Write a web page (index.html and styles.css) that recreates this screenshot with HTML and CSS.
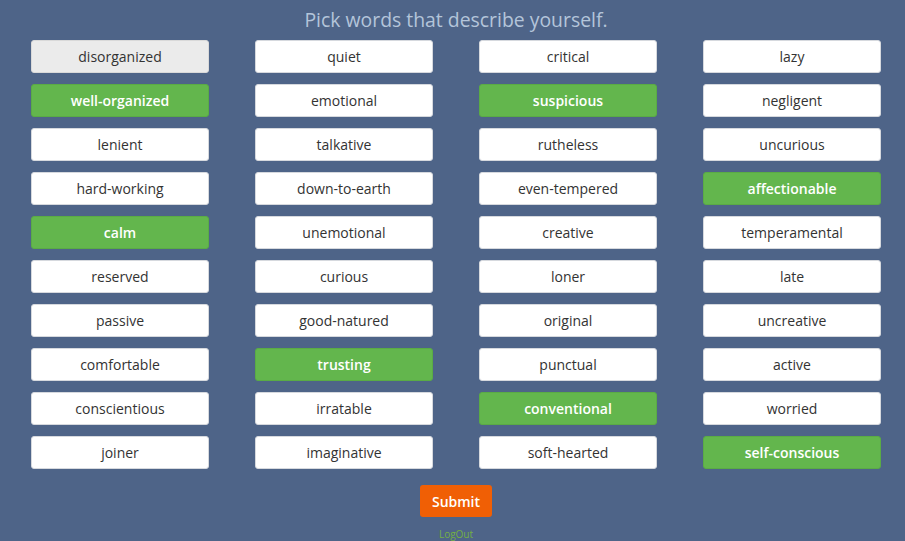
FILE: index.html
```html
<!DOCTYPE html>
<html>
<head>
<meta charset="utf-8">
<link rel="stylesheet" href="styles.css">
</head>
<body>
<div class="page">
  <h1 class="title">Pick words that describe yourself.</h1>
  <div class="grid">
    <button class="word hover">disorganized</button>
    <button class="word">quiet</button>
    <button class="word">critical</button>
    <button class="word">lazy</button>

    <button class="word on">well-organized</button>
    <button class="word">emotional</button>
    <button class="word on">suspicious</button>
    <button class="word">negligent</button>

    <button class="word">lenient</button>
    <button class="word">talkative</button>
    <button class="word">rutheless</button>
    <button class="word">uncurious</button>

    <button class="word">hard-working</button>
    <button class="word">down-to-earth</button>
    <button class="word">even-tempered</button>
    <button class="word on">affectionable</button>

    <button class="word on">calm</button>
    <button class="word">unemotional</button>
    <button class="word">creative</button>
    <button class="word">temperamental</button>

    <button class="word">reserved</button>
    <button class="word">curious</button>
    <button class="word">loner</button>
    <button class="word">late</button>

    <button class="word">passive</button>
    <button class="word">good-natured</button>
    <button class="word">original</button>
    <button class="word">uncreative</button>

    <button class="word">comfortable</button>
    <button class="word on">trusting</button>
    <button class="word">punctual</button>
    <button class="word">active</button>

    <button class="word">conscientious</button>
    <button class="word">irratable</button>
    <button class="word on">conventional</button>
    <button class="word">worried</button>

    <button class="word">joiner</button>
    <button class="word">imaginative</button>
    <button class="word">soft-hearted</button>
    <button class="word on">self-conscious</button>
  </div>
  <div class="actions">
    <button class="submit">Submit</button>
    <a class="logout" href="#">LogOut</a>
  </div>
</div>
</body>
</html>
```
FILE: styles.css
```css
html, body {
  margin: 0;
  padding: 0;
  background: #4e6488;
  height: 100%;
  overflow: hidden;
}
body {
  font-family: "Open Sans", "DejaVu Sans", sans-serif;
}
.page {
  width: 850px;
  margin-left: 31px;
  display: flex;
  flex-direction: column;
  align-items: center;
}
.title {
  margin: 6px 0 0;
  height: 34px;
  font-size: 19.4px;
  line-height: 28px;
  font-weight: 400;
  color: #b4c5da;
  text-align: center;
}
.grid {
  width: 100%;
  display: grid;
  grid-template-columns: repeat(4, 178px);
  column-gap: 46px;
  row-gap: 11px;
}
.word {
  height: 33px;
  margin: 0;
  padding: 0;
  border: 1px solid #d6d9de;
  border-radius: 3px;
  background: #ffffff;
  color: #333333;
  font-family: "Open Sans", "DejaVu Sans", sans-serif;
  font-size: 14px;
  line-height: 20px;
}
.word.hover {
  background: #ebebeb;
  border-color: #d9d9d9;
}
.word.on {
  background: #63b64d;
  border-color: #5aab45;
  color: #ffffff;
  font-weight: 600;
}
.actions {
  display: flex;
  flex-direction: column;
  align-items: center;
  margin-top: 16px;
}
.submit {
  width: 72px;
  height: 32px;
  margin: 0;
  padding: 0;
  border: none;
  border-radius: 3px;
  background: #f05f05;
  color: #ffffff;
  font-family: "Open Sans", "DejaVu Sans", sans-serif;
  font-size: 14px;
  font-weight: 600;
}
.logout {
  margin-top: 10px;
  font-size: 10px;
  line-height: 14px;
  color: #74b043;
  text-decoration: none;
}
```
